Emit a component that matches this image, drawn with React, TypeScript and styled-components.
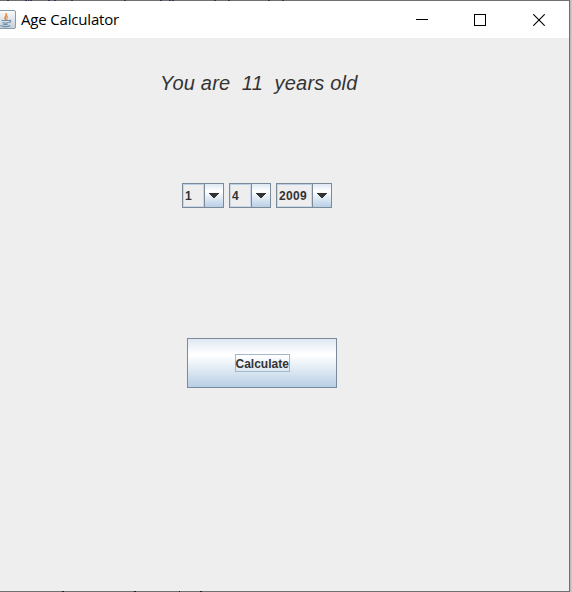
import React from 'react';
import styled, { createGlobalStyle } from 'styled-components';

const GlobalStyle = createGlobalStyle`
  html, body { margin: 0; padding: 0; overflow: hidden; }
  * { box-sizing: border-box; }
`;

const Desktop = styled.div`
  width: 572px;
  height: 592px;
  padding-right: 2px;
  background: linear-gradient(to right, #b9b9b9 570px, #b9b9b9 571px, #c8c8c8 571px);
`;

const Window = styled.div`
  display: flex;
  flex-direction: column;
  height: 592px;
  border-right: 1px solid #707070;
  background: #eeeeee;
`;

const Edge = styled.div`
  display: flex;
  flex: none;
  height: 1px;
  background: #707070;
`;

const Speck = styled.i<{ $gap: number; $width?: number; $color?: string }>`
  flex: none;
  width: ${p => p.$width ?? 2}px;
  height: 1px;
  margin-left: ${p => p.$gap}px;
  background: ${p => p.$color ?? '#3b2f5c'};
`;

const TitleBar = styled.header`
  display: flex;
  align-items: center;
  flex: none;
  height: 37px;
  background: #fff;
`;

const Title = styled.h1`
  flex: 1;
  margin: 0 0 2px 5px;
  font: 400 15px/20px 'Open Sans', 'Noto Sans', sans-serif;
  letter-spacing: -0.18px;
  color: #000;
  white-space: nowrap;
`;

const Controls = styled.div`
  display: flex;
  margin-right: 24px;
`;

const ControlButton = styled.button<{ $gap?: number }>`
  display: flex;
  margin-right: ${p => p.$gap ?? 0}px;
  padding: 0;
  border: 0;
  background: none;
`;

const Content = styled.main`
  display: flex;
  flex-direction: column;
  align-items: flex-start;
  flex: 1;
  color: #333;
`;

const Result = styled.p`
  margin: 33px 0 0 160px;
  font: italic 400 20px/24px 'Liberation Sans', Arial, sans-serif;
  letter-spacing: 0.2px;
  white-space: pre;
`;

const DateRow = styled.div`
  display: flex;
  gap: 5px;
  margin: 88px 0 0 182px;
`;

const Combo = styled.div<{ $width: number }>`
  display: flex;
  width: ${p => p.$width}px;
  height: 25px;
  border: 1px solid #7a8a99;
  font: bold 12px/23px 'Liberation Sans', Arial, sans-serif;
  letter-spacing: 0.3px;
`;

const ComboValue = styled.span`
  flex: 1;
  padding-left: 1px;
  line-height: 23px;
  border: 1px solid #c8d8e8;
  border-top-color: #b8cfe5;
`;

const ComboArrow = styled.span`
  display: flex;
  align-items: center;
  justify-content: center;
  width: 19px;
  border-left: 1px solid #7a8a99;
  background: linear-gradient(#dde8f3 0%, #fff 30%, #f8fbfd 38%, #b8cfe5 100%);
`;

const CalculateButton = styled.button`
  display: flex;
  align-items: center;
  justify-content: center;
  width: 150px;
  height: 50px;
  margin: 130px 0 0 187px;
  padding: 0;
  border: 1px solid #7a8a99;
  background: linear-gradient(#dde8f3 0%, #fff 30%, #fff 34%, #b8cfe5 100%);
`;

const FocusLabel = styled.span`
  width: 55px;
  height: 18px;
  border: 1px solid #a3b8cc;
  font: bold 12px/18px 'Liberation Sans', Arial, sans-serif;
  color: #333;
  white-space: nowrap;
`;

const JavaIcon = () => (
  <svg width="16" height="20" viewBox="0 0 16 20">
    <defs>
      <linearGradient id="tile" x1="0" y1="0" x2="0" y2="1">
        <stop offset="0" stopColor="#fbfcfd" />
        <stop offset="1" stopColor="#c3ced8" />
      </linearGradient>
    </defs>
    <rect x="-3.5" y=".5" width="19" height="18" rx="1.5" fill="url(#tile)" stroke="#8c9baa" />
    <path d="M5.8 10.2C2.8 7.6 6.9 6.3 5.8 3.3C8.6 5.6 4.4 7.2 5.8 10.2Z" fill="#e87b22" stroke="#e87b22" strokeWidth=".8" />
    <path d="M8 6.2C6 7.4 7.7 8.4 6.8 10" fill="none" stroke="#e98a3c" />
    <path d="M1.5 10.5H8.6M2.3 12.5C4.3 13.2 6.8 13.1 8.4 12.5M8.7 10.5C11.6 9.8 11 12.2 8.8 12.7M3 14.2C4.5 14.8 6.3 14.7 7.8 14.2M.5 15.5C3 17 8.2 16.8 10.2 15.4" fill="none" stroke="#6b8fac" strokeWidth="1.2" />
  </svg>
);

const ArrowIcon = () => (
  <svg width="10" height="5" viewBox="0 0 10 5" shapeRendering="crispEdges">
    <path d="M0 0H10V1H9V2H8V3H7V4H6V5H4V4H3V3H2V2H1V1H0Z" fill="#333" />
  </svg>
);

const MinimizeIcon = () => (
  <svg width="12" height="12" viewBox="0 0 12 12" shapeRendering="crispEdges">
    <rect y="5" width="12" height="1" fill="#000" />
  </svg>
);

const MaximizeIcon = () => (
  <svg width="12" height="12" viewBox="0 0 12 12" shapeRendering="crispEdges">
    <rect x=".5" y=".5" width="11" height="11" fill="none" stroke="#000" />
  </svg>
);

const CloseIcon = () => (
  <svg width="12" height="12" viewBox="0 0 12 12">
    <path d="M.3 .3L11.7 11.7M11.7 .3L.3 11.7" stroke="#000" strokeWidth="1.1" />
  </svg>
);

const dateParts = [
  { name: 'day', value: '1', width: 42 },
  { name: 'month', value: '4', width: 42 },
  { name: 'year', value: '2009', width: 56 },
];

export default function App() {
  return (
    <Desktop>
      <GlobalStyle />
      <Window>
        <Edge>
          <Speck $gap={7} /><Speck $gap={16} /><Speck $gap={1} $width={1} /><Speck $gap={1} />
          <Speck $gap={16} /><Speck $gap={4} /><Speck $gap={15} /><Speck $gap={51} />
          <Speck $gap={34} /><Speck $gap={7} /><Speck $gap={1} />
          <Speck $gap={40} /><Speck $gap={12} /><Speck $gap={38} /><Speck $gap={12} />
        </Edge>
        <TitleBar>
          <JavaIcon />
          <Title>Age Calculator</Title>
          <Controls>
            <ControlButton $gap={46} aria-label="Minimize"><MinimizeIcon /></ControlButton>
            <ControlButton $gap={47} aria-label="Maximize"><MaximizeIcon /></ControlButton>
            <ControlButton aria-label="Close"><CloseIcon /></ControlButton>
          </Controls>
        </TitleBar>
        <Content>
          <Result>{'You are  11  years old'}</Result>
          <DateRow>
            {dateParts.map(part => (
              <Combo key={part.name} $width={part.width}>
                <ComboValue>{part.value}</ComboValue>
                <ComboArrow><ArrowIcon /></ComboArrow>
              </Combo>
            ))}
          </DateRow>
          <CalculateButton><FocusLabel>Calculate</FocusLabel></CalculateButton>
        </Content>
        <Edge>
          <Speck $gap={62} $color="#241c24" /><Speck $gap={70} $color="#241c24" />
          <Speck $gap={43} $width={1} $color="#241c24" /><Speck $gap={20} $color="#241c24" />
        </Edge>
      </Window>
    </Desktop>
  );
}
